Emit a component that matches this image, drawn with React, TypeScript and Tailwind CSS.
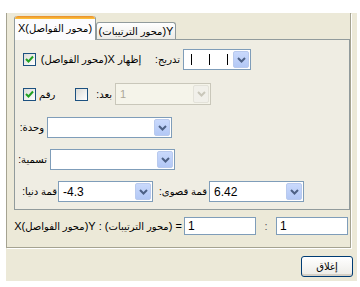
import React from 'react';

const Chevron = ({ disabled }: { disabled?: boolean }) => (
  <svg width="9" height="6" viewBox="0 0 9 6">
    <polyline
      points="1,1 4.5,4.5 8,1"
      fill="none"
      stroke={disabled ? '#C9C7BA' : '#4D6185'}
      strokeWidth="2"
    />
  </svg>
);

const Combo = ({
  width,
  disabled,
  children,
}: {
  width: string;
  disabled?: boolean;
  children?: React.ReactNode;
}) => (
  <div
    className={`flex h-[21px] shrink-0 items-stretch border p-px ${width} ${
      disabled ? 'border-[#C9C7BA] bg-[#F5F4EA]' : 'border-[#7F9DB9] bg-white'
    }`}
  >
    <div className="flex flex-1 items-center overflow-hidden pl-[3px]">{children}</div>
    <div
      className={`flex w-[16px] items-center justify-center rounded-[2px] border ${
        disabled
          ? 'border-[#E3E2D9] bg-[#F1F0EA]'
          : 'border-[#B9CAEE] bg-gradient-to-b from-[#C9D9FC] to-[#B3C8F5]'
      }`}
    >
      <Chevron disabled={disabled} />
    </div>
  </div>
);

const CheckBox = ({ checked }: { checked?: boolean }) => (
  <div className="flex h-[13px] w-[13px] shrink-0 items-center justify-center border border-[#1C5180] bg-gradient-to-br from-[#DCDCD7] to-white">
    {checked && (
      <svg width="9" height="9" viewBox="0 0 9 9">
        <polyline points="1,4 3.5,6.5 8,1.5" fill="none" stroke="#21A121" strokeWidth="2" />
      </svg>
    )}
  </div>
);

// نص عربي بخط أصغر قليلا
const Ar = ({ children }: { children: React.ReactNode }) => (
  <span dir="rtl" className="inline-block text-[10px]">
    {children}
  </span>
);

const Label = ({ width, children }: { width: string; children: React.ReactNode }) => (
  <div className={`flex shrink-0 justify-end ${width}`}>
    <span dir="ltr">{children}</span>
  </div>
);

const App = () => {
  return (
    <div className="h-[287px] w-[360px] bg-white pl-[6px] pt-[13px] font-['Liberation_Sans','DejaVu_Sans',sans-serif] text-[11px] text-black">
      <div className="flex h-[268px] w-[351px] flex-col bg-[#ECE9D8]">
        {/* الإطار الرئيسي */}
        <div className="h-[235px] w-[345px] border-x border-b border-[#A5A391] pl-[7px] pt-[3px] shadow-[1px_1px_0_#fff]">
          {/* التبويبات */}
          <div className="flex h-[23px] items-end">
            <div className="relative z-10 mb-[-1px] flex h-[24px] w-[82px] flex-col rounded-t-[3px] border-x border-[#919B9C] bg-[#FCFCFE]">
              <div className="h-[3px] rounded-t-[3px] bg-gradient-to-b from-[#E68B2C] to-[#FFC73C]" />
              <div className="flex flex-1 items-center justify-center whitespace-nowrap pb-[2px]">
                <span>X(</span>
                <Ar>محور الفواصل</Ar>
                <span>)</span>
              </div>
            </div>
            <div className="flex h-[17px] w-[80px] items-center justify-center whitespace-nowrap rounded-t-[3px] border-x border-t border-[#919B9C] bg-gradient-to-b from-white to-[#ECEBE6]">
              <span>(</span>
              <Ar>محور الترتيبات</Ar>
              <span>)Y</span>
            </div>
          </div>

          {/* لوحة التبويب */}
          <div className="h-[171px] w-[336px] border border-[#919B9C] bg-[#EFEDE3]">
            {/* تدريج */}
            <div className="mt-[9px] flex h-[21px] items-center pl-[8px]">
              <CheckBox checked />
              <div className="ml-[4px] flex w-[102px] shrink-0 items-center justify-center whitespace-nowrap">
                <span>(</span>
                <Ar>محور الفواصل</Ar>
                <span>)X&nbsp;</span>
                <Ar>إظهار</Ar>
              </div>
              <Label width="w-[38px]">
                <Ar>تدريج:</Ar>
              </Label>
              <div className="ml-[3px]">
                <Combo width="w-[68px]">
                  <div className="flex items-center gap-[17px] pl-[3px]">
                    <div className="h-[11px] w-px bg-black" />
                    <div className="h-[11px] w-px bg-black" />
                    <div className="h-[11px] w-px bg-black" />
                  </div>
                </Combo>
              </div>
            </div>

            {/* رقم / بعد */}
            <div className="mt-[13px] flex h-[22px] items-center pl-[8px]">
              <CheckBox checked />
              <div className="ml-[3px] w-[18px] shrink-0">
                <Ar>رقم</Ar>
              </div>
              <div className="ml-[18px]">
                <CheckBox />
              </div>
              <Label width="w-[24px]">
                <Ar>بعد:</Ar>
              </Label>
              <div className="ml-[3px]">
                <Combo width="w-[96px] h-[22px]" disabled>
                  <span className="text-[#ACA899]">1</span>
                </Combo>
              </div>
            </div>

            {/* وحدة */}
            <div className="mt-[12px] flex h-[21px] items-center">
              <Label width="w-[29px]">
                <Ar>وحدة:</Ar>
              </Label>
              <div className="ml-[3px]">
                <Combo width="w-[125px]" />
              </div>
            </div>

            {/* تسمية */}
            <div className="mt-[11px] flex h-[21px] items-center">
              <Label width="w-[32px]">
                <Ar>تسمية:</Ar>
              </Label>
              <div className="ml-[3px]">
                <Combo width="w-[125px]" />
              </div>
            </div>

            {/* قمة دنيا / قمة قصوى */}
            <div className="mt-[11px] flex h-[21px] items-center">
              <Label width="w-[42px]">
                <Ar>قمة دنيا:</Ar>
              </Label>
              <div className="ml-[1px]">
                <Combo width="w-[95px]">
                  <span className="text-[12px]">-4.3</span>
                </Combo>
              </div>
              <Label width="w-[54px]">
                <Ar>قمة قصوى:</Ar>
              </Label>
              <div className="ml-[2px]">
                <Combo width="w-[95px]">
                  <span className="text-[12px]">6.42</span>
                </Combo>
              </div>
            </div>
          </div>

          {/* نسبة المحاور */}
          <div className="mt-[7px] flex h-[18px] items-center">
            <div className="flex w-[168px] shrink-0 items-center justify-center whitespace-nowrap">
              <span>X(</span>
              <Ar>محور الفواصل</Ar>
              <span>)Y&nbsp;:&nbsp;(</span>
              <Ar>محور الترتيبات</Ar>
              <span>)&nbsp;=</span>
            </div>
            <div className="ml-[2px] flex h-[18px] w-[72px] items-center border border-[#7F9DB9] bg-white pl-[3px] text-[12px]">
              1
            </div>
            <div className="flex w-[20px] justify-center text-[#555]">:</div>
            <div className="flex h-[18px] w-[72px] items-center border border-[#7F9DB9] bg-white pl-[3px] text-[12px]">
              1
            </div>
          </div>
        </div>

        {/* زر الإغلاق */}
        <div className="mt-[8px] flex justify-end pr-[4px]">
          <button className="flex h-[21px] w-[52px] items-center justify-center rounded-[3px] border border-[#003C74] bg-gradient-to-b from-white to-[#ECEBE6] shadow-[inset_0_-2px_0_#D6D0C5]">
            <Ar>إغلاق</Ar>
          </button>
        </div>
      </div>
    </div>
  );
};

export default App;
